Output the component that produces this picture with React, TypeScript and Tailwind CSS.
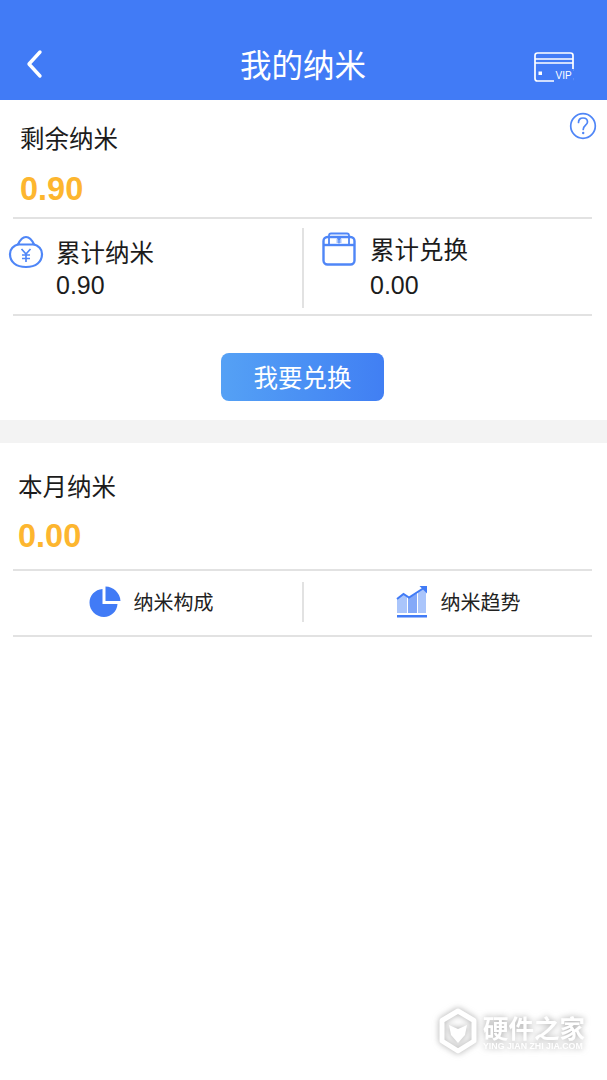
const cjk = "font-['Noto_Sans_CJK_SC','Liberation_Sans',sans-serif]";

function BagIcon() {
  return (
    <svg width="36" height="34" viewBox="0 0 36 34" fill="none" stroke="#4f86f7" strokeWidth="2.2" className="block">
      <path d="M11 9 C4 11 2 15 2 19 C2 27 8 32 18 32 C28 32 34 27 34 19 C34 15 32 11 25 9" />
      <path d="M10 9.5 C12 5 14 2 18 2 C22 2 24 5 26 9.5 Z" />
      <path d="M13.5 14 L18 19 L22.5 14 M18 19 V27 M14 20 H22 M14 23.5 H22" strokeWidth="1.7" />
    </svg>
  );
}

function WalletIcon() {
  return (
    <svg width="34" height="34" viewBox="0 0 34 34" fill="none" stroke="#4f86f7" strokeWidth="2.4" className="block">
      <rect x="1.5" y="5" width="31" height="27.5" rx="4" />
      <path d="M1.5 13 H32.5" />
      <path d="M7 13 V3.5 Q7 1.5 9 1.5 H25 Q27 1.5 27 3.5 V13" strokeWidth="1.8" />
      <path d="M14 4.5 L17 7.5 L20 4.5 M17 7.5 V11.5 M14.5 8 H19.5 M14.5 10 H19.5" strokeWidth="1.2" />
    </svg>
  );
}

function VipCard() {
  return (
    <svg width="40" height="30" viewBox="0 0 40 30" fill="none" className="block">
      <path d="M39 19 V3.5 Q39 1 36.5 1 H3.5 Q1 1 1 3.5 V26.5 Q1 29 3.5 29 H36 Q39 29 39 26" stroke="#fff" strokeWidth="1.7" />
      <path d="M1 7 H39 M1 11 H39" stroke="#fff" strokeWidth="1.7" />
      <rect x="4.5" y="19.5" width="3.5" height="3.5" fill="#fff" />
      <rect x="20" y="17" width="19.8" height="13" fill="#417bf6" />
      <text x="21.5" y="27" fill="#fff" fontSize="10" fontFamily="Liberation Sans">VIP</text>
    </svg>
  );
}

function PieIcon() {
  return (
    <svg width="32" height="32" viewBox="0 0 32 32" className="block">
      <path d="M13.5 3 V18 H28.5 C28 25.5 22 31 15 31 C7 31 0.5 24.5 0.5 16.5 C0.5 9.5 6 3.5 13.5 3 Z" fill="#417bf6" />
      <path d="M16.5 0.5 C24.5 0.5 31 7 31.5 15 H16.5 Z" fill="#417bf6" />
    </svg>
  );
}

function TrendIcon() {
  return (
    <svg width="32" height="32" viewBox="0 0 32 32" className="block">
      <path d="M1 13 L8 8 L11 11 V27 H1 Z" fill="#aac5fb" />
      <path d="M12 11 L13 12 L21 7 V27 H12 Z" fill="#84a9f8" />
      <path d="M22 6 L30 1 V27 H22 Z" fill="#aac5fb" />
      <path d="M1 13 L7.5 8 L13 11.5 L27 2.5" fill="none" stroke="#417bf6" strokeWidth="2" />
      <path d="M23.5 0 H31 V7.5 Z" fill="#417bf6" />
      <rect x="1" y="29" width="30" height="2.5" fill="#417bf6" />
    </svg>
  );
}

function Watermark() {
  return (
    <div className="absolute left-[439px] top-[1008px] flex items-start gap-[6px] text-white drop-shadow-[0_0_3px_rgba(110,110,110,0.6)]">
      <svg width="38" height="46" viewBox="0 0 38 46" fill="none" className="block">
        <path d="M19 3 L35 12.5 V33 L19 43 L3 33 V12.5 Z" stroke="#fff" strokeWidth="5" strokeLinejoin="round" />
        <path d="M10 17 L19 21 L28 17 L26 27 L19 35 L12 27 Z" fill="#fff" />
      </svg>
      <div className="flex flex-col pt-[4px]">
        <span className={`${cjk} text-[25.5px] leading-[30px] font-bold whitespace-nowrap`}>硬件之家</span>
        <span className="font-['Liberation_Sans',sans-serif] text-[8.8px] leading-[9px] font-bold whitespace-nowrap">YING JIAN ZHI JIA.COM</span>
      </div>
    </div>
  );
}

function Rule() {
  return <div className="ml-[13px] mr-[15px] h-[2px] bg-[#e2e2e2]" />;
}

function Link({ icon, label, extra }: { icon: React.ReactNode; label: string; extra: string }) {
  return (
    <div className={`flex items-center justify-center gap-[13px] ${extra}`}>
      {icon}
      <span className={`${cjk} text-[20px] leading-[28px] text-[#222222]`}>{label}</span>
    </div>
  );
}

export default function App() {
  return (
    <div className="relative min-h-[1080px] w-[607px] overflow-hidden bg-white">
      <header className="grid h-[100px] grid-cols-[1fr_auto_1fr] items-end bg-[#417bf6] pb-[18px] pl-[24px] pr-[33px]">
        <svg width="20" height="32" viewBox="0 0 20 32" fill="none" className="mb-[2px] block">
          <path d="M16 4 L5 16 L16 28" stroke="#fff" strokeWidth="3.4" strokeLinecap="round" strokeLinejoin="round" />
        </svg>
        <h1 className={`${cjk} relative left-[4px] mb-[2px] text-[31.5px] leading-[34px] font-normal text-white`}>我的纳米</h1>
        <div className="justify-self-end"><VipCard /></div>
      </header>

      <section className="relative pt-[20px]">
        <svg width="28" height="28" viewBox="0 0 28 28" fill="none" className="absolute right-[10px] top-[12px] block">
          <circle cx="14" cy="14" r="12.3" stroke="#4f86f7" strokeWidth="1.7" />
          <path d="M9.5 10.5 C9.5 7.5 11.5 6 14 6 C16.5 6 18.5 7.5 18.5 10 C18.5 13 14.2 13.5 14.2 17.5" stroke="#4f86f7" strokeWidth="1.7" strokeLinecap="round" />
          <circle cx="14.2" cy="21" r="1.2" fill="#4f86f7" />
        </svg>
        <div className={`${cjk} pl-[20px] text-[24.5px] leading-[36px] text-[#1c1c1c]`}>剩余纳米</div>
        <div className="pl-[20px] pt-[15px] pb-[10px] font-['Liberation_Sans',sans-serif] text-[32.5px] leading-[36px] font-bold text-[#fdb62f]">0.90</div>
        <Rule />
        <div className="flex h-[95px] items-center">
          <div className="flex w-[302px] items-start self-stretch pl-[8px] pt-[16px]">
            <div className="mr-[12px]"><BagIcon /></div>
            <div className="flex flex-col">
              <span className={`${cjk} text-[24.5px] leading-[34px] text-[#1c1c1c]`}>累计纳米</span>
              <span className="pt-[2px] font-['Liberation_Sans',sans-serif] text-[25px] leading-[28px] text-[#1c1c1c]">0.90</span>
            </div>
          </div>
          <div className="mt-[2px] h-[80px] w-[2px] bg-[#e2e2e2]" />
          <div className="flex flex-1 items-start self-stretch pl-[18px] pt-[12px]">
            <div className="mr-[14px] mt-[1px]"><WalletIcon /></div>
            <div className="flex flex-col pt-[1px]">
              <span className={`${cjk} text-[24.5px] leading-[34px] text-[#1c1c1c]`}>累计兑换</span>
              <span className="pt-[5px] font-['Liberation_Sans',sans-serif] text-[25px] leading-[28px] text-[#1c1c1c]">0.00</span>
            </div>
          </div>
        </div>
        <Rule />
        <div className="flex h-[104px] items-center justify-center pt-[18px]">
          <button className={`${cjk} relative -left-[1px] h-[48px] w-[163px] rounded-[8px] bg-gradient-to-r from-[#55a1f5] to-[#417ff3] text-[24.5px] leading-[48px] text-white`}>我要兑换</button>
        </div>
      </section>

      <div className="h-[23px] bg-[#f3f3f3]" />

      <section className="pt-[25px]">
        <div className={`${cjk} pl-[18px] text-[24.5px] leading-[36px] text-[#1c1c1c]`}>本月纳米</div>
        <div className="pl-[18px] pt-[14px] pb-[15px] font-['Liberation_Sans',sans-serif] text-[32.5px] leading-[36px] font-bold text-[#fdb62f]">0.00</div>
        <Rule />
        <div className="flex h-[64px] items-center pb-[3px]">
          <Link extra="w-[302px]" icon={<PieIcon />} label="纳米构成" />
          <div className="h-[40px] w-[2px] bg-[#e2e2e2]" />
          <Link extra="flex-1 pl-[5px]" icon={<TrendIcon />} label="纳米趋势" />
        </div>
        <Rule />
      </section>

      <Watermark />
    </div>
  );
}
